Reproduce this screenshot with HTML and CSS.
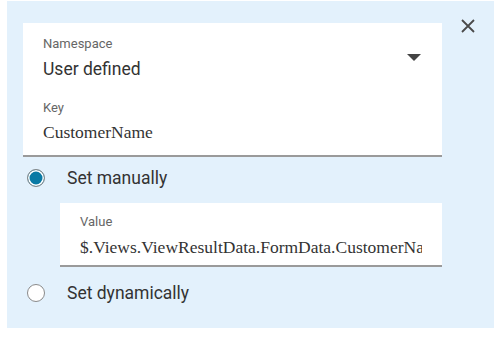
FILE: index.html
```html
<!DOCTYPE html>
<html lang="en">
<head>
    <meta charset="UTF-8">
    <meta name="viewport" content="width=device-width, initial-scale=1.0">
    <title>Variable</title>
    <link rel="stylesheet" href="styles.css">
</head>
<body>

    <div class="panel">
        <div class="top-row">
            <div class="card">
                <div class="select-field">
                    <div class="field-text">
                        <div class="field-label">Namespace</div>
                        <div class="select-value">User defined</div>
                    </div>
                    <span class="dropdown-arrow"></span>
                </div>
                <div class="field-label key-label">Key</div>
                <div class="field-value">CustomerName</div>
            </div>
            <button class="close-button" aria-label="Close">
                <svg width="14" height="14" viewBox="0 0 14 14">
                    <path d="M1 1 L13 13 M13 1 L1 13" stroke="#4a4a4a" stroke-width="1.8" fill="none"/>
                </svg>
            </button>
        </div>

        <label class="radio-row">
            <span class="radio checked"></span>
            <span class="radio-text">Set manually</span>
        </label>

        <div class="value-card">
            <div class="field-label">Value</div>
            <div class="field-value clipped">$.Views.ViewResultData.FormData.CustomerName</div>
        </div>

        <label class="radio-row second">
            <span class="radio"></span>
            <span class="radio-text">Set dynamically</span>
        </label>
    </div>

</body>
</html>
```

FILE: styles.css
```css
body {
    margin: 0;
    font-family: Roboto, "Liberation Sans", Arial, sans-serif;
    color: #333;
    background-color: white;
}
.panel {
    margin: 1px 0 0 7px;
    width: 487px;
    height: 327px;
    box-sizing: border-box;
    padding: 22px 0 0 16px;
    background-color: #e3f1fc;
}
.top-row {
    display: flex;
    align-items: flex-start;
}
.card {
    width: 419px;
    box-sizing: border-box;
    padding: 13px 20px 13px 20px;
    background-color: white;
    border-bottom: 2px solid #9a9a9a;
}
.select-field {
    display: flex;
    justify-content: space-between;
    align-items: flex-start;
}
.field-label {
    font-size: 13px;
    line-height: 16px;
    color: #666;
}
.select-value {
    margin-top: 7px;
    font-size: 17.5px;
    line-height: 20px;
    color: #333;
}
.dropdown-arrow {
    margin: 18px 1px 0 0;
    width: 0;
    height: 0;
    border-left: 7px solid transparent;
    border-right: 7px solid transparent;
    border-top: 7px solid #444;
}
.key-label {
    margin-top: 21px;
}
.field-value {
    margin-top: 6px;
    font-family: "Liberation Serif", "Times New Roman", serif;
    font-size: 17.5px;
    line-height: 20px;
    color: #333;
    white-space: nowrap;
}
.clipped {
    margin-top: 7px;
    overflow: hidden;
}
.close-button {
    margin: -4px 0 0 19px;
    padding: 0;
    width: 14px;
    height: 14px;
    border: none;
    background: none;
    cursor: pointer;
}
.radio-row {
    display: flex;
    align-items: center;
    height: 30px;
    margin-top: 6px;
    margin-left: 4px;
}
.radio-row.second {
    margin-top: 11px;
}
.radio {
    width: 18px;
    height: 18px;
    box-sizing: border-box;
    border: 1.5px solid #8a8a8a;
    border-radius: 50%;
    background-color: white;
}
.radio.checked {
    background-color: #0a7aa5;
    box-shadow: inset 0 0 0 1.5px white;
}
.radio-text {
    margin-left: 22px;
    font-size: 17.5px;
    color: #333;
}
.value-card {
    margin: 10px 0 0 37px;
    width: 382px;
    box-sizing: border-box;
    padding: 11px 20px 8px 20px;
    background-color: white;
    border-bottom: 2px solid #9a9a9a;
}
```
